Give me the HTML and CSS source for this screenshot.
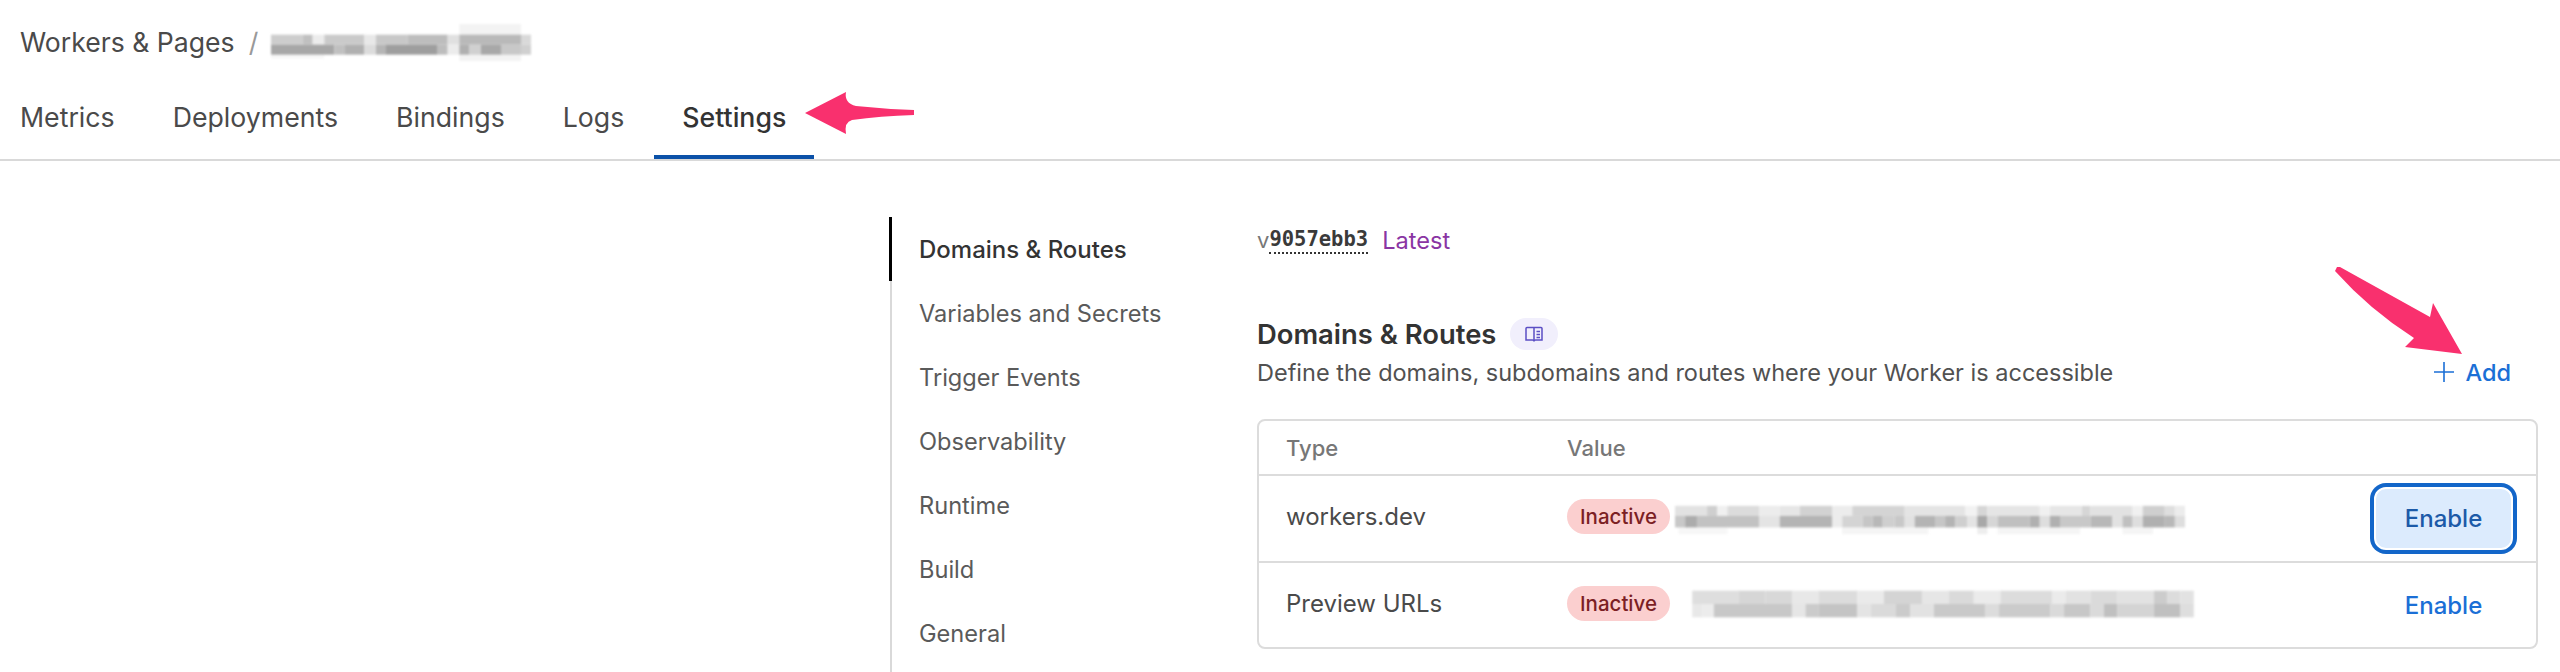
FILE: index.html
```html
<!DOCTYPE html>
<html lang="en">
<head>
<meta charset="utf-8">
<title>Workers &amp; Pages - Settings</title>
<link rel="stylesheet" href="styles.css">
</head>
<body>
<header class="top">
  <div class="crumbs">
    <span>Workers &amp; Pages</span>
    <span class="sep">/</span>
    <svg class="blur b0" width="260" height="37" viewBox="30 18 780 111">
      <rect x="595" y="18" width="185" height="111" fill="#f3f3f3"/><rect x="30" y="102" width="160" height="20" fill="#f7f7f7"/>
      <rect x="30" y="50" width="95" height="30" fill="#cdcdcd"/><rect x="125" y="50" width="30" height="30" fill="#c0c0c0"/><rect x="155" y="50" width="35" height="30" fill="#ececec"/><rect x="190" y="50" width="120" height="30" fill="#cacaca"/><rect x="310" y="50" width="35" height="30" fill="#e8e8e8"/><rect x="345" y="50" width="95" height="30" fill="#c8c8c8"/><rect x="440" y="50" width="120" height="30" fill="#bdbdbd"/><rect x="560" y="50" width="35" height="30" fill="#e0e0e0"/><rect x="595" y="50" width="185" height="30" fill="#b9b9b9"/><rect x="780" y="50" width="30" height="30" fill="#d9d9d9"/>
      <rect x="30" y="80" width="190" height="30" fill="#a7a7a7"/><rect x="220" y="80" width="30" height="30" fill="#c0c0c0"/><rect x="250" y="80" width="60" height="30" fill="#b0b0b0"/><rect x="310" y="80" width="35" height="30" fill="#dcdcdc"/><rect x="345" y="80" width="30" height="30" fill="#b5b5b5"/><rect x="375" y="80" width="155" height="30" fill="#9e9e9e"/><rect x="530" y="80" width="30" height="30" fill="#bdbdbd"/><rect x="560" y="80" width="35" height="30" fill="#ececec"/><rect x="595" y="80" width="30" height="30" fill="#b0b0b0"/><rect x="625" y="80" width="35" height="30" fill="#d0d0d0"/><rect x="660" y="80" width="60" height="30" fill="#a8a8a8"/><rect x="720" y="80" width="60" height="30" fill="#c8c8c8"/><rect x="780" y="80" width="30" height="30" fill="#d0d0d0"/>
    </svg>
  </div>
  <nav class="tabs">
    <a class="tab">Metrics</a>
    <a class="tab">Deployments</a>
    <a class="tab">Bindings</a>
    <a class="tab">Logs</a>
    <a class="tab on">Settings</a>
  </nav>
</header>
<main class="main">
  <aside class="side">
    <a class="item on">Domains &amp; Routes</a>
    <a class="item">Variables and Secrets</a>
    <a class="item">Trigger Events</a>
    <a class="item">Observability</a>
    <a class="item">Runtime</a>
    <a class="item">Build</a>
    <a class="item">General</a>
  </aside>
  <section class="content">
    <div class="version"><span class="v">v</span><span class="hash">9057ebb3</span><span class="latest">Latest</span></div>
    <div class="head">
      <div>
        <h2 class="title">Domains &amp; Routes
          <span class="doc"><svg width="20" height="20" viewBox="0 0 20 20" fill="none" stroke="#5b4fc4" stroke-width="1.5"><path d="M10 3.500H3a1 1 0 0 0-1 1V16h6.500a1.500 1.500 0 0 1 1.500 1.500 1.500 1.500 0 0 1 1.500-1.500H18V4.500a1 1 0 0 0-1-1h-7zM10 3.500v14M12.500 7.500H16M12.500 10.500H16M12.500 13.500H16"/></svg></span>
        </h2>
        <p class="desc">Define the domains, subdomains and routes where your Worker is accessible</p>
      </div>
      <a class="add"><svg width="20" height="24" viewBox="0 0 20 24" stroke="#1b6fd6" stroke-width="1.600"><path d="M10 2v20M0 12h20"/></svg>Add</a>
    </div>
    <div class="card">
      <div class="row hdr"><div class="c1">Type</div><div class="c2">Value</div></div>
      <div class="row">
        <div class="c1">workers.dev</div>
        <div class="c2"><span class="pill">Inactive</span>
          <svg class="blur b1" width="510" height="34" viewBox="30 20 1510 100">
            <rect x="40" y="92" width="145" height="20" fill="#f7f7f7"/><rect x="525" y="92" width="255" height="20" fill="#f5f5f5"/><rect x="925" y="92" width="30" height="20" fill="#eeeeee"/><rect x="985" y="92" width="245" height="20" fill="#f5f5f5"/><rect x="1355" y="92" width="90" height="20" fill="#f5f5f5"/>
            <rect x="30" y="28" width="95" height="30" fill="#e2e2e2"/><rect x="125" y="28" width="30" height="30" fill="#cfcfcf"/><rect x="155" y="28" width="30" height="30" fill="#f0f0f0"/><rect x="185" y="28" width="95" height="30" fill="#dcdcdc"/><rect x="280" y="28" width="60" height="30" fill="#ececec"/><rect x="340" y="28" width="60" height="30" fill="#e6e6e6"/><rect x="400" y="28" width="95" height="30" fill="#d2d2d2"/><rect x="495" y="28" width="60" height="30" fill="#ececec"/><rect x="555" y="28" width="155" height="30" fill="#d4d4d4"/><rect x="710" y="28" width="180" height="30" fill="#e4e4e4"/><rect x="890" y="28" width="35" height="30" fill="#f2f2f2"/><rect x="925" y="28" width="30" height="30" fill="#d6d6d6"/><rect x="955" y="28" width="155" height="30" fill="#e5e5e5"/><rect x="1110" y="28" width="30" height="30" fill="#f0f0f0"/><rect x="1140" y="28" width="95" height="30" fill="#e6e6e6"/><rect x="1235" y="28" width="25" height="30" fill="#d6d6d6"/><rect x="1260" y="28" width="125" height="30" fill="#e2e2e2"/><rect x="1385" y="28" width="30" height="30" fill="#f0f0f0"/><rect x="1415" y="28" width="65" height="30" fill="#cfcfcf"/><rect x="1480" y="28" width="30" height="30" fill="#dedede"/><rect x="1510" y="28" width="30" height="30" fill="#ececec"/>
            <rect x="30" y="58" width="30" height="34" fill="#c8c8c8"/><rect x="60" y="58" width="35" height="34" fill="#acacac"/><rect x="95" y="58" width="185" height="34" fill="#c2c2c2"/><rect x="280" y="58" width="60" height="34" fill="#e4e4e4"/><rect x="340" y="58" width="155" height="34" fill="#b4b4b4"/><rect x="495" y="58" width="30" height="34" fill="#ececec"/><rect x="525" y="58" width="60" height="34" fill="#d4d4d4"/><rect x="585" y="58" width="30" height="34" fill="#c6c6c6"/><rect x="615" y="58" width="30" height="34" fill="#b8b8b8"/><rect x="645" y="58" width="35" height="34" fill="#cfcfcf"/><rect x="680" y="58" width="30" height="34" fill="#c8c8c8"/><rect x="710" y="58" width="30" height="34" fill="#e2e2e2"/><rect x="740" y="58" width="60" height="34" fill="#b4b4b4"/><rect x="800" y="58" width="30" height="34" fill="#c6c6c6"/><rect x="830" y="58" width="30" height="34" fill="#b4b4b4"/><rect x="860" y="58" width="35" height="34" fill="#cfcfcf"/><rect x="895" y="58" width="30" height="34" fill="#e4e4e4"/><rect x="925" y="58" width="30" height="34" fill="#a8a8a8"/><rect x="955" y="58" width="30" height="34" fill="#d6d6d6"/><rect x="985" y="58" width="95" height="34" fill="#c0c0c0"/><rect x="1080" y="58" width="30" height="34" fill="#b0b0b0"/><rect x="1110" y="58" width="30" height="34" fill="#dedede"/><rect x="1140" y="58" width="30" height="34" fill="#b0b0b0"/><rect x="1170" y="58" width="90" height="34" fill="#c8c8c8"/><rect x="1260" y="58" width="65" height="34" fill="#b8b8b8"/><rect x="1325" y="58" width="30" height="34" fill="#e2e2e2"/><rect x="1355" y="58" width="30" height="34" fill="#c0c0c0"/><rect x="1385" y="58" width="30" height="34" fill="#dedede"/><rect x="1415" y="58" width="65" height="34" fill="#b0b0b0"/><rect x="1480" y="58" width="30" height="34" fill="#b8b8b8"/><rect x="1510" y="58" width="30" height="34" fill="#dedede"/>
          </svg>
        </div>
        <div class="c3"><button class="btn focus">Enable</button></div>
      </div>
      <div class="row">
        <div class="c1">Preview URLs</div>
        <div class="c2"><span class="pill">Inactive</span>
          <svg class="blur b2" width="538" height="30" viewBox="25 20 1505 90">
            <rect x="25" y="25" width="140" height="40" fill="#dedede"/><rect x="165" y="25" width="80" height="40" fill="#d6d6d6"/><rect x="245" y="25" width="80" height="40" fill="#d8d8d8"/><rect x="325" y="25" width="80" height="40" fill="#e8e8e8"/><rect x="405" y="25" width="115" height="40" fill="#dcdcdc"/><rect x="520" y="25" width="80" height="40" fill="#eaeaea"/><rect x="600" y="25" width="115" height="40" fill="#d4d4d4"/><rect x="715" y="25" width="80" height="40" fill="#e6e6e6"/><rect x="795" y="25" width="75" height="40" fill="#dadada"/><rect x="870" y="25" width="80" height="40" fill="#ebebeb"/><rect x="950" y="25" width="155" height="40" fill="#dcdcdc"/><rect x="1105" y="25" width="40" height="40" fill="#ebebeb"/><rect x="1145" y="25" width="75" height="40" fill="#e2e2e2"/><rect x="1220" y="25" width="80" height="40" fill="#dadada"/><rect x="1300" y="25" width="110" height="40" fill="#e2e2e2"/><rect x="1410" y="25" width="40" height="40" fill="#cccccc"/><rect x="1450" y="25" width="40" height="40" fill="#dcdcdc"/><rect x="1490" y="25" width="40" height="40" fill="#e2e2e2"/>
            <rect x="25" y="65" width="30" height="40" fill="#e8e8e8"/><rect x="55" y="65" width="35" height="40" fill="#ececec"/><rect x="90" y="65" width="235" height="40" fill="#c8c8c8"/><rect x="325" y="65" width="40" height="40" fill="#e6e6e6"/><rect x="365" y="65" width="40" height="40" fill="#cbcbcb"/><rect x="405" y="65" width="115" height="40" fill="#c4c4c4"/><rect x="520" y="65" width="40" height="40" fill="#e4e4e4"/><rect x="560" y="65" width="75" height="40" fill="#dadada"/><rect x="635" y="65" width="45" height="40" fill="#cbcbcb"/><rect x="680" y="65" width="70" height="40" fill="#e2e2e2"/><rect x="750" y="65" width="155" height="40" fill="#c9c9c9"/><rect x="905" y="65" width="40" height="40" fill="#dcdcdc"/><rect x="945" y="65" width="155" height="40" fill="#cbcbcb"/><rect x="1100" y="65" width="40" height="40" fill="#dadada"/><rect x="1140" y="65" width="80" height="40" fill="#c7c7c7"/><rect x="1220" y="65" width="40" height="40" fill="#dadada"/><rect x="1260" y="65" width="40" height="40" fill="#c0c0c0"/><rect x="1300" y="65" width="110" height="40" fill="#d4d4d4"/><rect x="1410" y="65" width="80" height="40" fill="#c0c0c0"/><rect x="1490" y="65" width="40" height="40" fill="#dedede"/>
          </svg>
        </div>
        <div class="c3"><button class="btn">Enable</button></div>
      </div>
    </div>
  </section>
</main>
<svg class="arrow" width="2560" height="672" viewBox="0 0 2560 672" fill="#f9306e">
  <path d="M805 113 846 92Q844 103 856 106Q885 109 914 110L914 115Q880 116 852 120Q844 122 846 134Z"/>
  <path d="M2337 267 2340 267 2430 317 2433 303 2462 354 2405 347 2414 338Q2370 310 2335 271Z"/>
</svg>
</body>
</html>
```
FILE: styles.css
```css
* { box-sizing: border-box; }
html, body { margin: 0; height: 672px; overflow: hidden; background: #fff; }
body { position: relative; font-family: Inter, "Noto Sans", sans-serif; font-size: 24px; color: #4f4f4f; }

.top { height: 161px; border-bottom: 2px solid #d9d9d9; padding: 0 20px; }
.crumbs { display: flex; align-items: center; height: 84px; font-size: 26.600px; color: #4a4a4a; }
.sep { margin: 0 13px 0 14px; color: #999; }
.tabs { display: flex; gap: 58px; height: 75px; }
.tab { position: relative; display: block; padding-top: 17px; font-size: 26.700px; color: #4a4a4a; }
.tab.on { font-weight: 500; color: #333; }
.tab.on::after { content: ""; position: absolute; left: -28px; right: -28px; bottom: 0; height: 4px; background: #0b51a8; }

.main { display: flex; margin-left: 890px; padding-top: 56px; height: 511px; }
.side { width: 367px; flex: none; border-left: 2px solid #d9d9d9; }
.item { display: flex; align-items: center; height: 64px; padding-left: 27px; color: #5a5a5a; font-size: 23.600px; }
.item.on { color: #333; font-weight: 500; font-size: 24px; box-shadow: -3px 0 0 #000; }

.content { width: 1281px; flex: none; }
.version { display: flex; align-items: center; height: 46px; font-size: 22px; }
.v { color: #777; }
.hash { font-family: "DejaVu Sans Mono", monospace; font-size: 20.500px; font-weight: 700; color: #3a3a3a; border-bottom: 2px dotted #333; line-height: 26px; }
.latest { margin-left: 14px; color: #8a35a3; font-size: 23.600px; }
.head { display: flex; justify-content: space-between; align-items: flex-end; margin-top: 55px; }
.title { display: flex; align-items: center; gap: 14px; margin: 0; height: 32px; font-size: 27.400px; font-weight: 600; color: #333; }
.doc { display: flex; align-items: center; justify-content: center; width: 48px; height: 32px; border-radius: 16px; background: #f1effc; }
.desc { margin: 7px 0 0; height: 32px; line-height: 32px; font-size: 23.500px; color: #515151; }
.add { display: flex; align-items: center; gap: 11px; margin: 0 27px 1px 0; height: 32px; color: #1b6fd6; font-size: 23.500px; font-weight: 500; }

.card { margin-top: 30px; width: 1281px; height: 230px; border: 2px solid #dcdcdc; border-radius: 8px; }
.row { display: flex; align-items: center; height: 87px; padding-left: 27px; border-bottom: 2px solid #dcdcdc; font-size: 24px; color: #4a4a4a; }
.row:last-child { border-bottom: 0; height: 85px; }
.row.hdr { height: 55px; font-size: 22px; font-weight: 500; color: #777; }
.row:not(.hdr) .c1, .row:not(.hdr) .c2 { margin-bottom: 4px; }
.c1 { width: 281px; flex: none; }
.c2 { flex: 1; display: flex; align-items: center; }
.c3 { width: 185px; flex: none; display: flex; justify-content: center; }
.pill { display: inline-flex; align-items: center; height: 35px; padding: 0 13px; border-radius: 18px; background: #fbcfcf; color: #7c1f24; font-size: 20.500px; font-weight: 500; }
.blur { display: block; filter: blur(1.200px); }
.b0 { margin-top: 1px; }
.b1 { margin: 7px 0 0 5px; }
.b2 { margin-left: 4px; }
.btn { width: 147px; height: 71px; padding: 0; border: 0; border-radius: 16px; background: transparent; color: #1b6fd6; font: 500 24px Inter, sans-serif; }
.btn.focus { background: #dcebfd; color: #1c5aa8; box-shadow: inset 0 0 0 4px #1366c9, inset 0 0 0 6px #fff; }

.arrow { position: absolute; left: 0; top: 0; pointer-events: none; }
```
